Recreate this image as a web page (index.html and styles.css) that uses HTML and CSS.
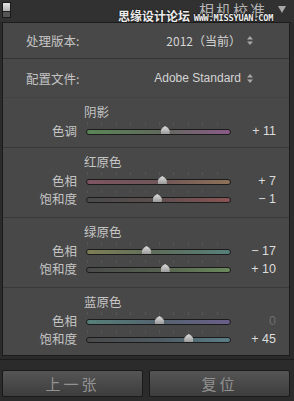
FILE: index.html
```html
<!DOCTYPE html>
<html lang="zh-CN">
<head>
    <meta charset="UTF-8">
    <title>相机校准</title>
    <link rel="stylesheet" href="styles.css">
</head>
<body>
    <div class="header">
        <div class="toggle"><span></span></div>
        <div class="title">相机校准</div>
        <div class="collapse"></div>
        <div class="watermark"><span class="wm-cn">思缘设计论坛</span> <span class="wm-en">WWW.MISSYUAN.COM</span></div>
    </div>

    <div class="panel">
        <div class="setting first">
            <span class="setting-label">处理版本:</span>
            <span class="setting-value">2012（当前）</span>
            <svg class="updown" width="6" height="9" viewBox="0 0 6 9"><path d="M3 0L6 3.5H0Z M3 9L6 5.5H0Z" fill="#a8a8a8"/></svg>
        </div>
        <div class="setting second">
            <span class="setting-label">配置文件:</span>
            <span class="setting-value">Adobe Standard</span>
            <svg class="updown" width="6" height="9" viewBox="0 0 6 9"><path d="M3 0L6 3.5H0Z M3 9L6 5.5H0Z" fill="#a8a8a8"/></svg>
        </div>

        <div class="group shadows">
            <div class="group-title">阴影</div>
            <div class="slider-row">
                <span class="slider-label">色调</span>
                <div class="track tint"><span class="thumb" style="left: 55%"></span></div>
                <span class="slider-value">+ 11</span>
            </div>
        </div>

        <div class="group">
            <div class="group-title">红原色</div>
            <div class="slider-row">
                <span class="slider-label">色相</span>
                <div class="track red-hue"><span class="thumb" style="left: 53%"></span></div>
                <span class="slider-value">+ 7</span>
            </div>
            <div class="slider-row">
                <span class="slider-label">饱和度</span>
                <div class="track red-sat"><span class="thumb" style="left: 49.5%"></span></div>
                <span class="slider-value">&minus; 1</span>
            </div>
        </div>

        <div class="group">
            <div class="group-title">绿原色</div>
            <div class="slider-row">
                <span class="slider-label">色相</span>
                <div class="track green-hue"><span class="thumb" style="left: 42%"></span></div>
                <span class="slider-value">&minus; 17</span>
            </div>
            <div class="slider-row">
                <span class="slider-label">饱和度</span>
                <div class="track green-sat"><span class="thumb" style="left: 55%"></span></div>
                <span class="slider-value">+ 10</span>
            </div>
        </div>

        <div class="group last">
            <div class="group-title">蓝原色</div>
            <div class="slider-row">
                <span class="slider-label">色相</span>
                <div class="track blue-hue"><span class="thumb" style="left: 51%"></span></div>
                <span class="slider-value zero">0</span>
            </div>
            <div class="slider-row">
                <span class="slider-label">饱和度</span>
                <div class="track blue-sat"><span class="thumb" style="left: 71.5%"></span></div>
                <span class="slider-value">+ 45</span>
            </div>
        </div>
    </div>

    <div class="buttons">
        <button class="btn">上一张</button>
        <button class="btn">复位</button>
    </div>
</body>
</html>
```

FILE: styles.css
```css
body {
    margin: 0;
    width: 294px;
    height: 401px;
    overflow: hidden;
    background-color: #2b2b2b;
    font-family: "Noto Sans CJK SC", "Liberation Sans", sans-serif;
    color: #c9c9c9;
}
.header {
    position: relative;
    height: 22px;
    display: flex;
    align-items: flex-start;
    background-color: #313131;
}
.toggle {
    width: 7px;
    height: 14px;
    margin: 2px 0 0 2px;
    background: linear-gradient(#e6e6e6, #8a8a8a);
    border: 1px solid #1a1a1a;
    display: flex;
    align-items: flex-end;
}
.toggle span {
    display: block;
    width: 7px;
    height: 5px;
    background-color: #555;
    border-top: 1px solid #222;
}
.title {
    margin-left: auto;
    padding-top: 2px;
    font-size: 15px;
    line-height: 16px;
    letter-spacing: 2px;
    color: #b4b4b4;
}
.collapse {
    width: 0;
    height: 0;
    margin: 6px 8px 0 11px;
    border-left: 4px solid transparent;
    border-right: 4px solid transparent;
    border-top: 7px solid #a8a8a8;
}
.watermark {
    position: absolute;
    left: 118px;
    top: 8px;
    line-height: 13px;
    font-weight: bold;
    color: #ececec;
    white-space: nowrap;
    text-shadow: 1px 0 #1e1e1e, -1px 0 #1e1e1e, 0 1px #1e1e1e, 0 -1px #1e1e1e;
}
.wm-cn {
    font-size: 12px;
}
.wm-en {
    font-family: "DejaVu Sans Mono", monospace;
    font-size: 8.6px;
    letter-spacing: -0.2px;
}
.panel {
    margin: 0 4px 0 2px;
    border: 1px solid #1c1c1c;
    background-color: #484848;
}
.setting {
    display: flex;
    align-items: center;
    font-size: 12.5px;
}
.setting.first {
    height: 35px;
}
.setting.second {
    height: 38px;
    border-top: 1px solid #333;
}
.setting-label {
    margin-left: 23px;
    color: #c4c4c4;
}
.setting-value {
    margin-left: auto;
    color: #d4d4d4;
    font-size: 12px;
    font-family: "Liberation Sans", "Noto Sans CJK SC", sans-serif;
}
.setting.first .setting-value {
    font-family: "Noto Sans CJK SC", sans-serif;
}
.updown {
    margin: 0 36px 0 6px;
}
.group {
    border-top: 1px solid #383838;
    padding: 5px 13px 10px 0;
}
.group.shadows {
    padding-bottom: 8px;
    border-top-color: #424242;
}
.group.last {
    padding-bottom: 8px;
}
.group-title {
    height: 18px;
    line-height: 18px;
    margin-left: 81px;
    font-size: 12.5px;
    color: #c4c4c4;
}
.slider-row {
    display: grid;
    grid-template-columns: 74px 145px 1fr;
    column-gap: 9px;
    align-items: center;
    height: 18px;
}
.slider-label {
    text-align: right;
    font-size: 12.5px;
    color: #c4c4c4;
}
.slider-value {
    text-align: right;
    font-family: "Liberation Sans", sans-serif;
    font-size: 12.5px;
    color: #dcdcdc;
}
.slider-value.zero {
    color: #6e6e6e;
}
.track {
    position: relative;
    height: 4px;
    border: 1px solid #1b1b1b;
    border-radius: 3px;
    margin-top: 3px;
}
.track::before {
    content: "";
    position: absolute;
    left: 0;
    right: 0;
    top: -8px;
    height: 3px;
    background: repeating-linear-gradient(90deg, #555 0 1px, transparent 1px 14.4px);
}
.thumb {
    position: absolute;
    top: -4px;
    width: 9px;
    height: 8px;
    margin-left: -5px;
    background: linear-gradient(#dedede, #9a9a9a);
    clip-path: polygon(50% 0, 75% 20%, 100% 50%, 100% 100%, 0 100%, 0 50%, 25% 20%);
}
.tint { background: linear-gradient(90deg, #5a8656, #606a5c 50%, #8a5a88); }
.red-hue { background: linear-gradient(90deg, #7e5462, #6e5658 50%, #8e7258); }
.red-sat { background: linear-gradient(90deg, #4a4a4a, #5e4e4e 50%, #8a5454); }
.green-hue { background: linear-gradient(90deg, #7e7e56, #5e6e5c 50%, #56807a); }
.green-sat { background: linear-gradient(90deg, #4a4a4a, #56604f 50%, #6a8a5c); }
.blue-hue { background: linear-gradient(90deg, #56807a, #54646e 50%, #6a5e8a); }
.blue-sat { background: linear-gradient(90deg, #4a4a4a, #4e5a62 50%, #5a7e88); }
.buttons {
    margin-top: 3px;
    border-top: 1px solid #1c1c1c;
    padding: 10px 4px 0 2px;
    display: flex;
    gap: 6px;
}
.btn {
    flex: 1;
    height: 27px;
    background: linear-gradient(#555, #3d3d3d);
    border: 1px solid #1a1a1a;
    border-radius: 2px;
    color: #929292;
    font-family: "Noto Sans CJK SC", sans-serif;
    font-size: 15px;
    letter-spacing: 3px;
    padding: 0;
}
```
